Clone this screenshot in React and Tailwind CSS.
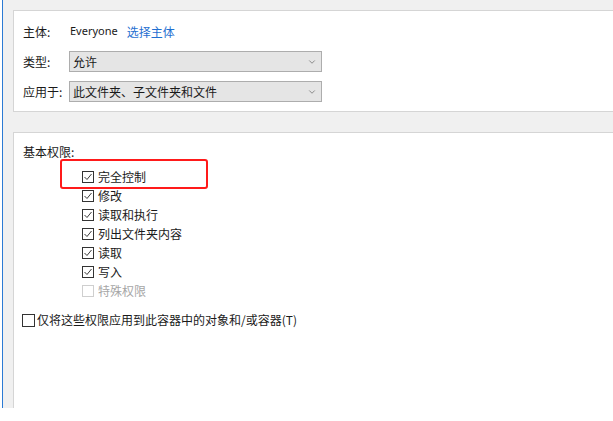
import { ChevronDown } from 'lucide-react';

const font = { fontFamily: '"Noto Sans CJK SC", "Liberation Sans", sans-serif' };

const perms = [
  { label: '完全控制', checked: true },
  { label: '修改', checked: true },
  { label: '读取和执行', checked: true },
  { label: '列出文件夹内容', checked: true },
  { label: '读取', checked: true },
  { label: '写入', checked: true },
  { label: '特殊权限', checked: false, disabled: true },
];

function CheckBox({ checked, disabled, big }) {
  return (
    <span className={`${big ? 'w-[13px] h-[13px]' : 'w-[12px] h-[12px]'} border shrink-0 flex items-center justify-center bg-white ${disabled ? 'border-[#cfcfcf]' : 'border-[#333333]'}`}>
      {checked && (
        <svg width="10" height="10" viewBox="0 0 10 10" fill="none">
          <path d="M1.5 5 L4 7.5 L8.5 2" stroke="#3a3a3a" strokeWidth="1" />
        </svg>
      )}
    </span>
  );
}

function Select({ value }) {
  return (
    <div className="w-[253px] h-[21px] bg-[#e5e5e5] border border-[#adadad] flex items-center justify-between pl-[3px] pr-[4px] text-[12px] text-[#1a1a1a]">
      <span>{value}</span>
      <ChevronDown size={10} strokeWidth={1.5} className="text-[#555]" />
    </div>
  );
}

export default function App() {
  return (
    <div className="w-[613px] h-[421px] bg-white overflow-hidden text-[#1a1a1a]" style={font}>
      <div className="h-[408px] ml-[2px] border-l-[1.5px] border-[#2b7ad4] bg-[#f0f0f0] pl-[10px] pt-[10px] flex flex-col gap-[20px]">
        {/* subject / type / applies to */}
        <div className="h-[102px] bg-white border-y border-l border-[#d5d5d5] pl-[9px] pt-[10px] flex flex-col gap-[9px] text-[12px]">
          <div className="flex items-center h-[21px]">
            <span className="w-[47px]">主体:</span>
            <span className="text-[11px]" style={{ fontFamily: '"Noto Sans", "Liberation Sans", sans-serif' }}>Everyone</span>
            <span className="ml-[9px] text-[#1f6fd0]">选择主体</span>
          </div>
          <div className="flex items-center">
            <span className="w-[46px]">类型:</span>
            <Select value="允许" />
          </div>
          <div className="flex items-center">
            <span className="w-[46px]">应用于:</span>
            <Select value="此文件夹、子文件夹和文件" />
          </div>
        </div>

        {/* basic permissions */}
        <div className="flex-1 bg-white border-t border-l border-[#d5d5d5] pl-[9px] pt-[10px] text-[12px] relative">
          <div className="h-[18px] flex items-center">基本权限:</div>
          <div className="flex flex-col pl-[59px] mt-[6px]">
            {perms.map(p => (
              <div key={p.label} className="h-[19px] flex items-center gap-[4px]">
                <CheckBox checked={p.checked} disabled={p.disabled} />
                <span className={p.disabled ? 'text-[#a6a6a6]' : ''}>{p.label}</span>
              </div>
            ))}
          </div>
          <div className="flex items-center gap-[2px] mt-[11px] -ml-[1px]">
            <CheckBox big />
            <span>仅将这些权限应用到此容器中的对象和/或容器(T)</span>
          </div>

          <div className="absolute left-[46px] top-[26px] w-[148px] h-[30px] border-[2.5px] border-[#ff1a1a] rounded-[3px]" />
        </div>
      </div>
    </div>
  );
}
